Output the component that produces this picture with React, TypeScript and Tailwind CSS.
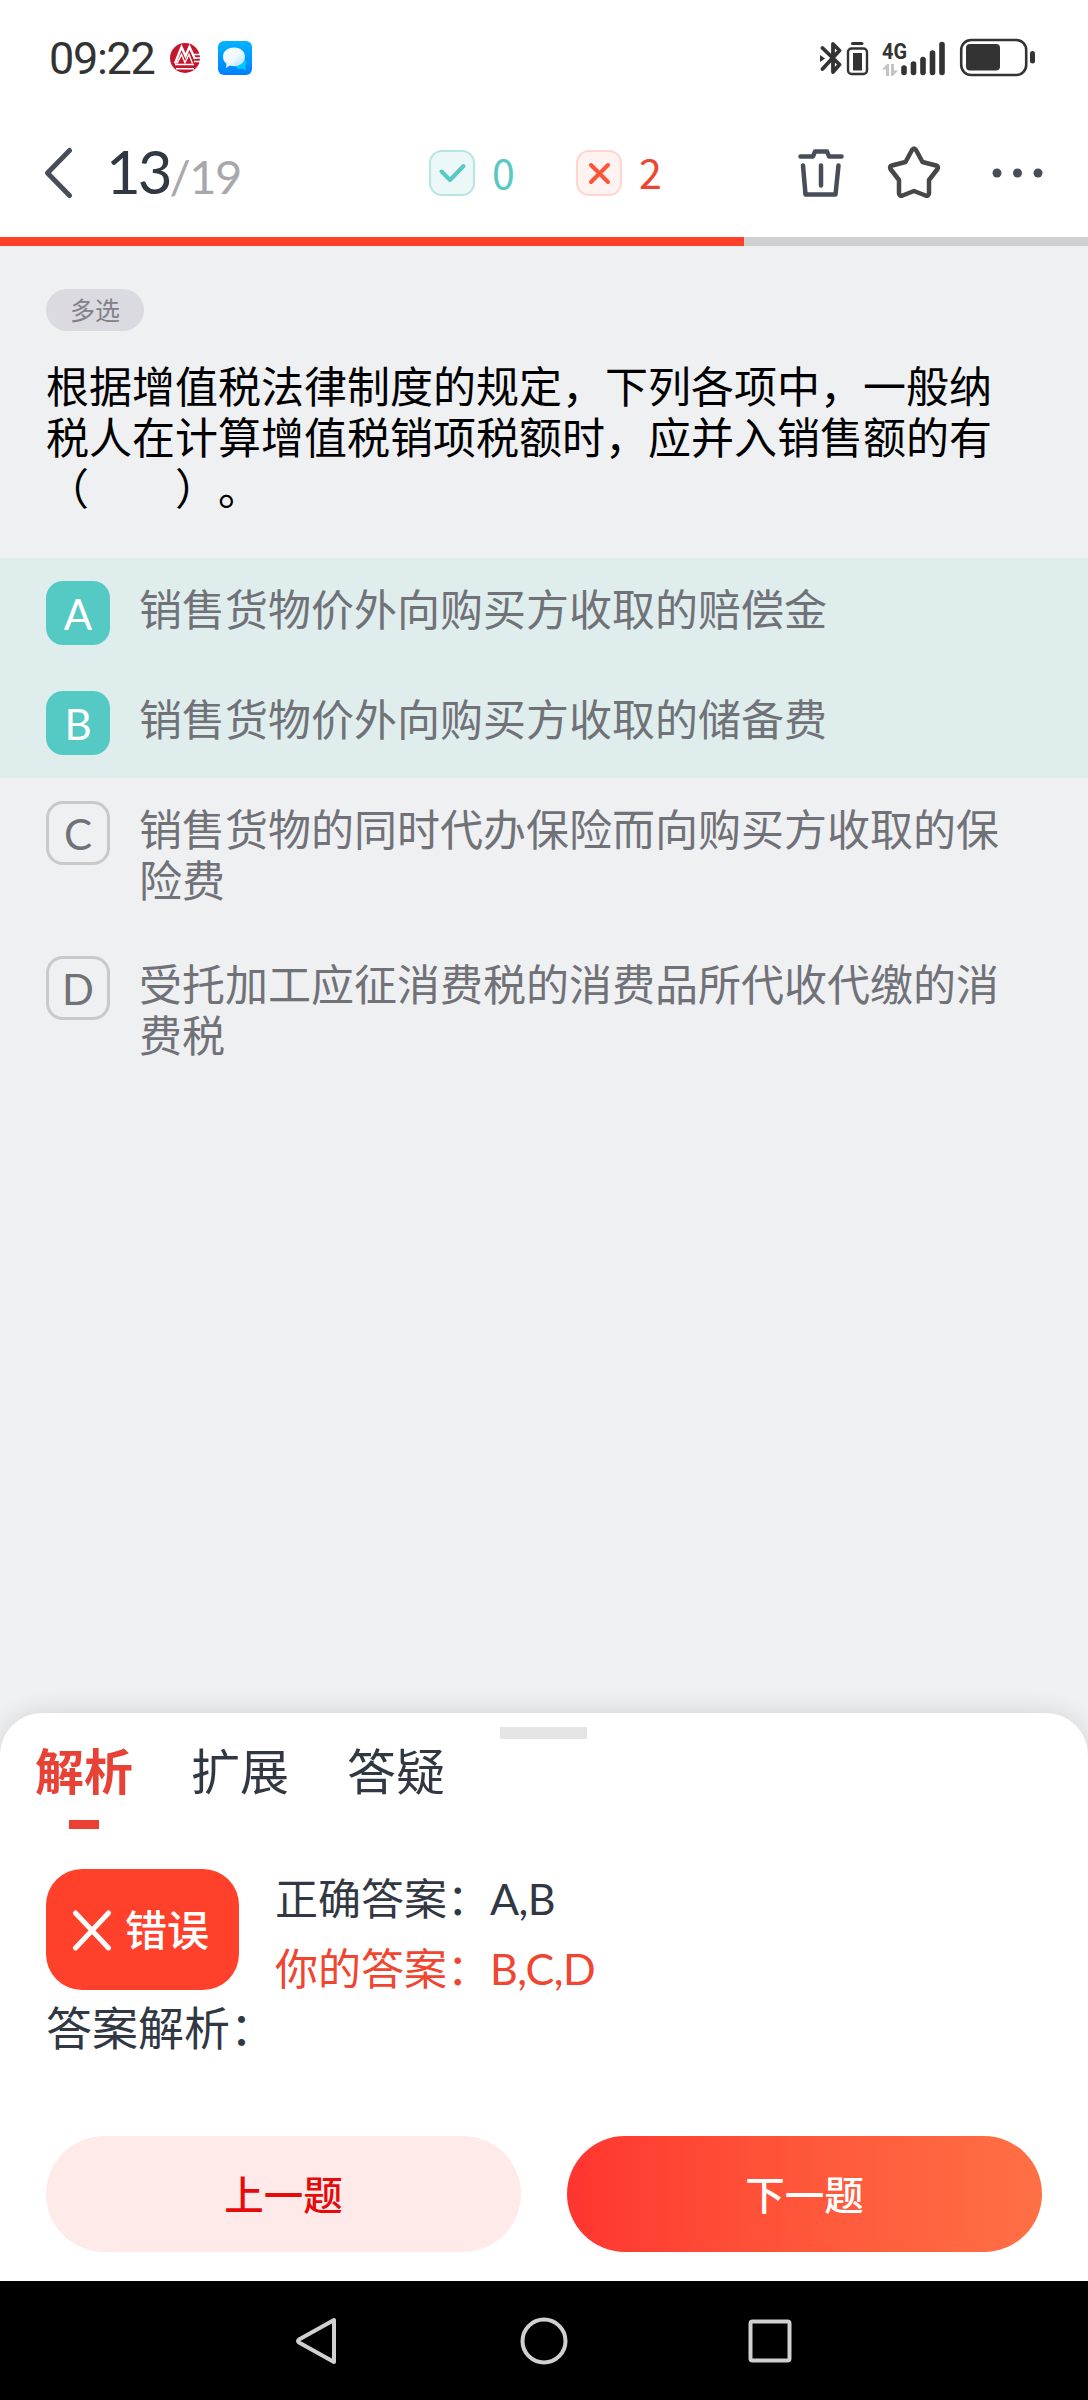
import React, { useState } from 'react';
import { clsx } from 'clsx';

const TOTAL = 19;
const CURRENT = 13;

interface Option {
  key: string;
  text: string;
  correct: boolean;
}

const OPTIONS: Option[] = [
  { key: 'A', text: '销售货物价外向购买方收取的赔偿金', correct: true },
  { key: 'B', text: '销售货物价外向购买方收取的储备费', correct: true },
  { key: 'C', text: '销售货物的同时代办保险而向购买方收取的保险费', correct: false },
  { key: 'D', text: '受托加工应征消费税的消费品所代收代缴的消费税', correct: false },
];

const TABS = ['解析', '扩展', '答疑'];

const StatusBar: React.FC = () => (
  <div className="flex h-[116px] items-center pl-[49px] pr-[53px] text-[#333]">
    <span className="w-[121px] font-['Roboto'] text-[45px] leading-none font-[450] tracking-[-1.3px]">09:22</span>
    <svg width="30" height="30" viewBox="0 0 30 30" className="shrink-0">
      <circle cx="15" cy="15" r="15" fill="#c4162d" />
      <path d="M5 20.500 11.500 4l4 9 4-9 5.500 12" fill="none" stroke="#fff" strokeWidth="2.400" />
      <path d="M7 20.500l4.500-9 3.500 8 4-8 3.500 9" fill="none" stroke="#fff" strokeWidth="1.400" />
      <path d="M5 21.500h19M6 25.800h18M24 11.500h6M24 15h6M24 18.500h6" stroke="#fff" strokeWidth="1.400" />
    </svg>
    <svg width="34" height="34" viewBox="0 0 34 34" className="ml-[18px] shrink-0">
      <defs>
        <linearGradient id="chat" x1="0" y1="0" x2="0" y2="1">
          <stop offset="0" stopColor="#00b4ff" />
          <stop offset="1" stopColor="#0080ff" />
        </linearGradient>
        <linearGradient id="bubble" x1="0" y1="0" x2="1" y2="1">
          <stop offset=".5" stopColor="#f2faff" />
          <stop offset="1" stopColor="#a8dcff" />
        </linearGradient>
      </defs>
      <rect width="34" height="34" rx="6" fill="url(#chat)" />
      <path d="M26 18c3 2 3 5 1 7.500l1 4-4-2c-3 .6-5 0-6.500-1.500z" fill="#00c8ff" />
      <path d="M16 6.500c6.500 0 11 4 11 9.300s-4.500 9.400-11 9.400c-1.500 0-2.800-.2-4-.6L8 27l.5-4.200C6 21 5 18.500 5 15.800 5 10.500 9.500 6.500 16 6.500z" fill="url(#bubble)" />
    </svg>

    <div className="ml-auto flex items-center">
      {/* Bluetooth + device battery */}
      <svg width="49" height="36" viewBox="0 0 49 36" fill="none" stroke="#333">
        <path d="M2.500 8 19.500 24.500 13 32V4l6.500 6.500L2.500 29" strokeWidth="3.800" strokeLinejoin="round" strokeLinecap="round" />
        <path d="M0 15v7l5-3.500z" fill="#333" stroke="none" />
        <rect x="28" y="8.500" width="19" height="25.500" rx="3.500" strokeWidth="2.400" />
        <rect x="33" y="13" width="9" height="17.500" fill="#333" stroke="none" />
        <path d="M32.500 3.500h9.500" strokeWidth="3" strokeLinecap="round" />
      </svg>
      {/* Signal */}
      <svg width="64" height="36" viewBox="0 0 64 36" className="ml-[13px] overflow-visible">
        <text x="0" y="19" fill="#333" fontFamily="Roboto" fontWeight="700" fontSize="22.500" textLength="25" lengthAdjust="spacingAndGlyphs">4G</text>
        <path d="M0 29.500l5-5.500h2v12H4v-6.500zM9 24h3v6.500h4L11 36H9z" fill="#c4c4c4" />
        <g stroke="#333" strokeWidth="5.600" strokeLinecap="round">
          <path d="M22 28v4.500M31.500 24v8.500M41 19.500v13M50.500 13v19.500M60 4.500v28" />
        </g>
      </svg>
      <svg width="76" height="40" viewBox="0 0 76 40" className="ml-[13px]">
        <rect x="2.200" y="2" width="65" height="35" rx="10" fill="none" stroke="#333" strokeWidth="2.600" />
        <rect x="7" y="6" width="34" height="26.500" rx="4" fill="#333" />
        <rect x="71" y="13" width="5" height="12.500" rx="2.500" fill="#333" />
      </svg>
    </div>
  </div>
);

const Header: React.FC = () => (
  <div className="flex h-[121px] items-center pb-[7px] pl-[43px] pr-[44px]">
    <button>
      <svg width="30" height="52" viewBox="0 0 30 52" fill="none" stroke="#484e59" strokeWidth="5" strokeLinecap="round" strokeLinejoin="round">
        <path d="M26.500 3.500 4.500 26l22 22.500" />
      </svg>
    </button>
    <div className="mb-[4px] ml-[33px] flex w-[320px] items-baseline font-['Lato'] leading-none">
      <span className="text-[60px] tracking-[-3px] text-[#323843]">13</span>
      <span className="text-[47px] tracking-[-1.5px] text-[#a8a8ac]">/{TOTAL}</span>
    </div>
    <div className="ml-[3px] flex items-center font-['Noto_Sans_CJK_SC'] text-[41px] leading-none">
      <svg width="46" height="46" viewBox="0 0 46 46" fill="none">
        <rect x="1" y="1" width="44" height="44" rx="12" fill="#ebf8f7" stroke="#b5e6e2" strokeWidth="2" />
        <path d="M12.500 21.500l8.500 8.500 13.500-14" stroke="#55c9c3" strokeWidth="4" strokeLinecap="round" strokeLinejoin="round" />
      </svg>
      <span className="mb-[3px] ml-[17px] w-[84px] text-[#5ac8c2]">0</span>
      <svg width="46" height="46" viewBox="0 0 46 46" fill="none">
        <rect x="1" y="1" width="44" height="44" rx="12" fill="#fff3f2" stroke="#ffd5d0" strokeWidth="2" />
        <path d="M15 15l17 17M32 15 15 32" stroke="#fb5439" strokeWidth="4" strokeLinecap="round" />
      </svg>
      <span className="mb-[3px] ml-[17px] text-[#ee4531]">2</span>
    </div>
    <div className="ml-auto flex items-center">
      <svg width="46" height="50" viewBox="0 0 46 50" fill="none" stroke="#474d59" strokeWidth="4.500" strokeLinecap="round" strokeLinejoin="round">
        <path d="M2.500 8.500H15l2-5h12l2 5h12.500M5 17.500l2.500 29h30l3-29M23 17.500v20" />
      </svg>
      <svg width="54" height="54" viewBox="0 0 54 54" className="mb-[3px] ml-[43px]" fill="none" stroke="#474747" strokeWidth="4.500" strokeLinejoin="round">
        <path d="M25 5q2-3 4 0l6.500 12 13.500 3.500q3 1 1.500 3.500l-8.500 11v13.500q-.5 3-3.500 2L27 46 15.500 50.500q-3 1-3.500-2V35L3.500 24q-1.500-2.500 1.500-3.500L18.500 17z" />
      </svg>
      <svg width="52" height="10" viewBox="0 0 52 10" className="ml-[51px]" fill="#474d59">
        <circle cx="5" cy="5" r="4.500" />
        <circle cx="25.500" cy="5" r="4.500" />
        <circle cx="46" cy="5" r="4.500" />
      </svg>
    </div>
  </div>
);

const OptionRow: React.FC<{ option: Option }> = ({ option }) => (
  <div className={clsx('flex min-h-[110px] items-start pl-[46px] pr-[80px]', option.correct && 'bg-[#dfedec]')}>
    <div
      className={clsx(
        "mt-[23px] flex size-[64px] shrink-0 items-center justify-center rounded-[17px] pt-[2px] font-['Lato'] text-[42px] leading-none",
        option.correct ? 'bg-[#55cac4] text-white' : 'border-[3px] border-[#c9c9cb] text-[#707278]'
      )}
    >
      {option.key}
    </div>
    <p className="ml-[29px] pt-[24px] pb-[29px] text-[43px] leading-[51px] text-[#707278]">{option.text}</p>
  </div>
);

export default function App() {
  const [tab, setTab] = useState('解析');

  return (
    <div className="flex h-[2400px] w-[1088px] flex-col overflow-hidden bg-[#eff0f2] font-['Noto_Sans_CJK_SC',sans-serif] [text-spacing-trim:space-all]">
      <div className="bg-white">
        <StatusBar />
        <Header />
      </div>
      <div className="h-[9px] bg-[#cfd0d1]">
        <div className="h-full bg-[#ff402b]" style={{ width: `${(CURRENT / TOTAL) * 100}%` }} />
      </div>

      {/* Question */}
      <div className="h-[312px] pt-[43px] pr-[90px] pl-[46px]">
        <span className="flex h-[42px] w-[98px] items-center justify-center rounded-full bg-[#dadae0] pb-[2px] text-[25px] leading-none text-[#818187]">
          多选
        </span>
        <p className="mt-[28px] text-[43px] leading-[51px] text-black">
          根据增值税法律制度的规定，下列各项中，一般纳税人在计算增值税销项税额时，应并入销售额的有（　　）。
        </p>
      </div>

      {OPTIONS.map(o => (
        <OptionRow key={o.key} option={o} />
      ))}

      {/* Analysis sheet */}
      <div className="mt-auto flex h-[568px] flex-col rounded-t-[42px] bg-white pt-[14px] shadow-[0_0_24px_rgba(0,0,0,0.12)]">
        <div className="ml-[500px] h-[12px] w-[87px] bg-[#e5e5e5]" />
        <div className="flex gap-[58px] pl-[35px]">
          {TABS.map(t => (
            <button key={t} onClick={() => setTab(t)} className="flex flex-col items-center">
              <span className={clsx('h-[81px] text-[49px] leading-[59px]', tab === t ? 'font-bold text-[#e84135]' : 'text-[#323843]')}>{t}</span>
              <span className={clsx('h-[9px] w-[30px]', tab === t && 'bg-[#ec4035]')} />
            </button>
          ))}
        </div>

        <div className="mt-[40px] flex h-[121px] pl-[46px]">
          <div className="flex h-[121px] w-[193px] items-center rounded-[36px] bg-[#ff402b] pl-[26px] text-white">
            <svg width="40" height="46" viewBox="0 0 40 46" stroke="#fff" strokeWidth="5" strokeLinecap="round">
              <path d="M3.500 6l33 35M36.500 6l-33 35" />
            </svg>
            <span className="mb-[4px] ml-[13px] text-[42px] leading-none font-medium">错误</span>
          </div>
          <div className="ml-[36px] text-[43px] leading-[70px] text-[#323843]">
            <p className="-mt-[8px] h-[70px]">正确答案：<span className="font-['Lato'] leading-none tracking-[-0.5px]">A,B</span></p>
            <p className="h-[70px] text-[#f04530]">你的答案：<span className="font-['Lato'] leading-none tracking-[-0.5px]">B,C,D</span></p>
          </div>
        </div>
        <p className="-mt-[3px] pl-[46px] text-[46px] leading-[76px] text-[#323843]">答案解析：</p>

        <div className="mt-auto mb-[29px] flex gap-[46px] px-[46px] text-[39.5px] font-medium">
          <button className="h-[116px] flex-1 rounded-full bg-[#ffeaea] pb-[3px] text-[#e60b0b]">上一题</button>
          <button className="h-[116px] flex-1 rounded-full bg-linear-to-r from-[#ff342f] to-[#ff7045] pb-[3px] text-white">下一题</button>
        </div>
      </div>

      {/* System navigation */}
      <div className="flex h-[119px] shrink-0 items-center justify-between bg-black pr-[296px] pl-[295px]">
        <svg width="44" height="50" viewBox="0 0 44 50" fill="none" stroke="#d0d0d0" strokeWidth="4" strokeLinejoin="round">
          <path d="M39 4v42L4 26.500q-2-1.500 0-3z" />
        </svg>
        <svg width="48" height="48" viewBox="0 0 48 48" fill="none" stroke="#d0d0d0" strokeWidth="4">
          <circle cx="24" cy="24" r="21.500" />
        </svg>
        <svg width="44" height="44" viewBox="0 0 44 44" fill="none" stroke="#d0d0d0" strokeWidth="4">
          <rect x="2.500" y="2.500" width="39" height="39" rx="2" />
        </svg>
      </div>
    </div>
  );
}
